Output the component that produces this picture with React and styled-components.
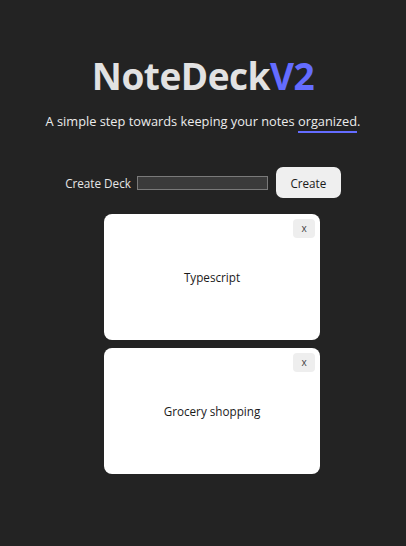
import React, { useState } from "react";
import styled, { createGlobalStyle } from "styled-components";

const GlobalStyle = createGlobalStyle`
  html, body {
    margin: 0;
    padding: 0;
    background-color: #232323;
    color: rgba(255, 255, 255, 0.87);
    font-family: "Open Sans", "Noto Sans", sans-serif;
  }
`;

const Page = styled.div`
  min-height: 546px;
  display: flex;
  flex-direction: column;
  align-items: center;
  padding-top: 52px;
  box-sizing: border-box;
`;

const Title = styled.h1`
  margin: 0;
  font-size: 37px;
  font-weight: 700;
  line-height: 48px;
  color: #e2e2e2;
  letter-spacing: -0.5px;
`;

const Accent = styled.span`
  color: #646cff;
`;

const Subtitle = styled.p`
  margin: 11px 0 0;
  font-size: 12.8px;
  line-height: 20px;
  color: #ececec;
`;

const Underlined = styled.span`
  border-bottom: 2px solid #646cff;
  padding-bottom: 1px;
`;

const CreateRow = styled.div`
  display: flex;
  align-items: center;
  gap: 6px;
  margin-top: 36px;
`;

const Label = styled.label`
  font-size: 11.7px;
  color: #e6e6e6;
`;

const DeckInput = styled.input`
  width: 129px;
  height: 12px;
  padding: 0;
  background: #3b3b3b;
  border: 1px solid #7a7a7a;
  outline: none;
  color: #fff;
`;

const CreateButton = styled.button`
  width: 65px;
  height: 31px;
  margin-left: 2px;
  border: none;
  border-radius: 7px;
  background: #efefef;
  color: #1a1a1a;
  font-family: inherit;
  font-size: 11.7px;
  cursor: pointer;
`;

const DeckList = styled.div`
  display: flex;
  flex-direction: column;
  gap: 8px;
  margin-top: 16px;
  padding-left: 18px;
`;

const Card = styled.div`
  position: relative;
  width: 216px;
  height: 126px;
  border-radius: 8px;
  background: #ffffff;
  color: #1a1a1a;
  display: flex;
  align-items: center;
  justify-content: center;
  font-size: 11.7px;
`;

const CloseButton = styled.button`
  position: absolute;
  top: 5px;
  right: 5px;
  width: 22px;
  height: 19px;
  padding: 0;
  border: none;
  border-radius: 4px;
  background: #eeeeee;
  color: #444;
  font-family: inherit;
  font-size: 10px;
  line-height: 19px;
  cursor: pointer;
`;

const App = () => {
  const [decks, setDecks] = useState(["Typescript", "Grocery shopping"]);
  const [name, setName] = useState("");

  const handleCreate = () => {
    if (!name.trim()) return;
    setDecks([...decks, name.trim()]);
    setName("");
  };

  return (
    <Page>
      <GlobalStyle />
      <Title>
        NoteDeck<Accent>V2</Accent>
      </Title>
      <Subtitle>
        A simple step towards keeping your notes <Underlined>organized</Underlined>.
      </Subtitle>
      <CreateRow>
        <Label htmlFor="deck-name">Create Deck</Label>
        <DeckInput id="deck-name" value={name} onChange={e => setName(e.target.value)} />
        <CreateButton onClick={handleCreate}>Create</CreateButton>
      </CreateRow>
      <DeckList>
        {decks.map((deck, index) => (
          <Card key={`${index}-deck`}>
            <CloseButton onClick={() => setDecks(decks.filter((_, i) => i !== index))}>x</CloseButton>
            {deck}
          </Card>
        ))}
      </DeckList>
    </Page>
  );
};

export default App;
